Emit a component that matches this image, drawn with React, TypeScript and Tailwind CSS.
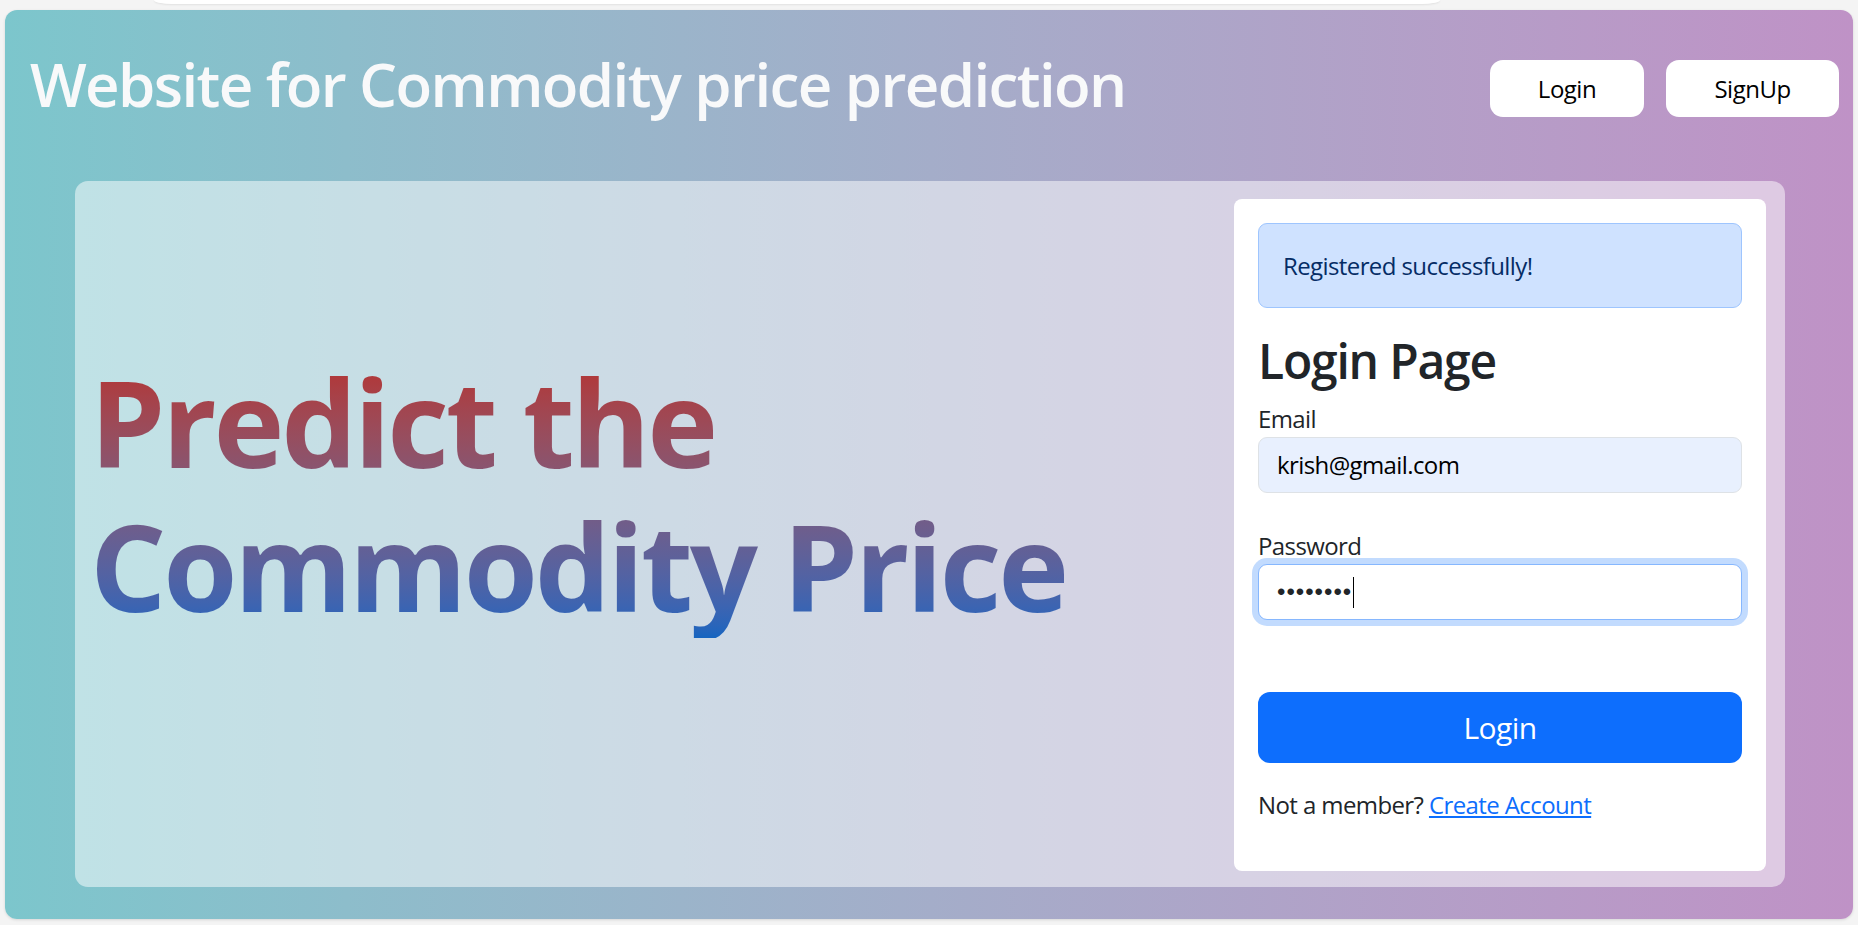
export default function App() {
  return (
    <div className="h-[925px] w-full overflow-hidden bg-[#f4f4f4] px-[5px] font-['Open_Sans','Noto_Sans',sans-serif]">
      <div className="ml-[149px] h-[4px] w-[1286px] rounded-b-[18px_4px] bg-white shadow-[0_1px_2px_rgba(0,0,0,0.08)]" />
      <div className="mt-[6px] flex h-[909px] flex-col rounded-[12px] bg-linear-to-r from-[#7cc6cc] to-[#bf92c6] shadow-[0_1px_3px_rgba(0,0,0,0.12)]">
        <header className="flex h-[171px] items-start justify-between pl-[25px] pr-[14px]">
          <h1 className="mt-[38px] text-[60px] leading-[72px] font-semibold tracking-[-1.6px] text-[#f8f9fa]">
            Website for Commodity price prediction
          </h1>
          <div className="mt-[50px] flex gap-[22px]">
            <button className="flex h-[57px] w-[154px] items-center justify-center rounded-[13px] bg-white text-[24px] tracking-[-0.5px] text-black">
              Login
            </button>
            <button className="flex h-[57px] w-[173px] items-center justify-center rounded-[13px] bg-white text-[24px] tracking-[-0.5px] text-black">
              SignUp
            </button>
          </div>
        </header>
        <main className="ml-[70px] flex h-[706px] w-[1710px] rounded-[13px] bg-white/50">
          <section className="flex-1 pl-[15px] pt-[169px]">
            <h2 className="inline-block bg-linear-to-b from-[#b92b27] to-[#1565c0] bg-clip-text text-[120px] leading-[144px] font-bold tracking-[-3.2px] text-transparent">
              Predict the
              <br />
              Commodity Price
            </h2>
          </section>
          <section className="mr-[19px] mt-[18px] w-[532px] self-start rounded-[8px] bg-white p-[24px] tracking-[-0.6px]">
            <div className="flex h-[85px] items-center rounded-[9px] border border-[#9ec5fe] bg-[#cfe2ff] px-[24px] text-[24px] leading-[36px] text-[#052c65]">
              Registered successfully!
            </div>
            <h3 className="mt-[24px] mb-[12px] text-[48px] leading-[57px] font-semibold tracking-[-1.2px] text-[#212529]">
              Login Page
            </h3>
            <label className="block text-[24px] leading-[36px] text-[#212529]">Email</label>
            <div className="flex h-[56px] items-center rounded-[9px] border border-[#dee2e6] bg-[#e8f0fe] px-[18px] text-[24px] text-black">
              krish@gmail.com
            </div>
            <label className="mt-[35px] block text-[24px] leading-[36px] text-[#212529]">Password</label>
            <div className="flex h-[56px] items-center rounded-[9px] border border-[#86b7fe] bg-white px-[18px] text-[24px] text-[#212529] shadow-[0_0_0_6px_rgba(13,110,253,0.25)]">
              <span className="font-['Liberation_Sans',sans-serif] tracking-[1px]">••••••••</span>
              <span className="ml-[1px] h-[31px] w-[1px] bg-black" />
            </div>
            <button className="mt-[72px] flex h-[71px] w-full items-center justify-center rounded-[12px] bg-[#0d6efd] text-[30px] text-white">
              Login
            </button>
            <p className="mt-[24px] mb-[24px] text-[24px] leading-[36px] text-[#212529]">
              Not a member?{" "}
              <a href="#" className="text-[#0d6efd] underline">
                Create Account
              </a>
            </p>
          </section>
        </main>
      </div>
    </div>
  );
}
